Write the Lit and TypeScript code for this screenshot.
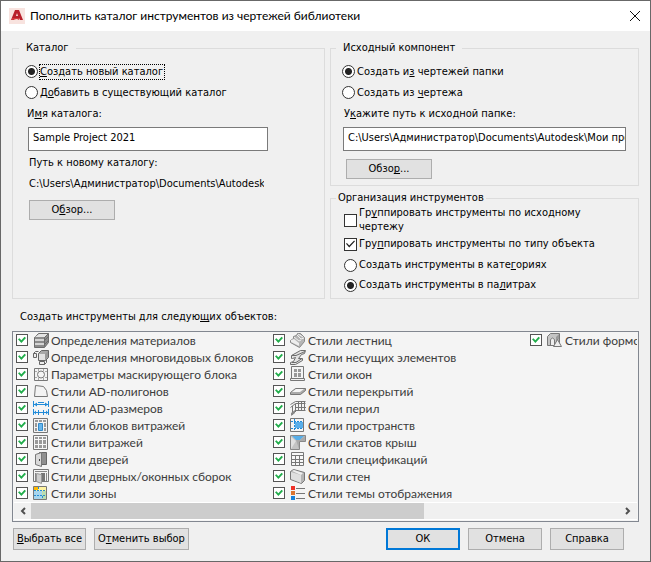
import { LitElement, html, svg, css, TemplateResult } from 'lit';
import { customElement } from 'lit/decorators.js';

type Item = { label: string; icon: TemplateResult };

const items: Item[] = [
  {
    label: 'Определения материалов',
    icon: svg`<path d="M1.500 5.500l4-4h10v9l-4 5h-10z" fill="#8c8c8c" stroke="#6c6c6c"/><path d="M2 5l4-3h9l-3 3z" fill="#e4e4e4"/><path d="M2 7h9v2H2zM2 11h9v2H2z" fill="#d4d4d4"/><path d="M11.500 5.500v9M11.500 8.500l4-4M11.500 12.500l4-4M11.500 5.500l4-4" stroke="#6c6c6c" fill="none"/>`,
  },
  {
    label: 'Определения многовидовых блоков',
    icon: svg`<path d="M5.500 4.500l3-3h7v7l-3 3h-7z" fill="#a8a8a8" stroke="#666"/><path d="M6 5h6v6H6z" fill="#e2e2e2"/><path d="M12 5l3-3v6l-3 3z" fill="#999"/><path d="M.5 4.500h3v4h-3zM.5 4.500l2-2h3M6.500 12.500h5v3h-5zM11.500 15.500l2-2v-3" fill="#eee" stroke="#666"/>`,
  },
  {
    label: 'Параметры маскирующего блока',
    icon: svg`<path d="M1.500 2.500h13v12h-13z" fill="#f4f4f4" stroke="#777"/><path d="M5.500 3v2m0 7v2M10.500 3v2m0 7v2M2 5.500h2m8 0h2M2 11.500h2m8 0h2" stroke="#aaa"/><circle cx="8" cy="8.500" r="3.500" fill="#f4f4f4" stroke="#777"/>`,
  },
  {
    label: 'Стили AD-полигонов',
    icon: svg`<path d="M2.500 2.500l8 1 3 4 1 6H1.500z" fill="#f3f3f3" stroke="#777"/>`,
  },
  {
    label: 'Стили AD-размеров',
    icon: svg`<path d="M.5 1v6M15.500 1v6M1 4.500h3M12 4.500h3M5 2.500h6M4 4.500h8M.5 9v6M15.500 9v6M5.500 10v5M10.500 10v5M1 12.500h14" stroke="#218bd8" fill="none"/><path d="M1 4.500l3-2v4zM15 4.500l-3-2v4zM1 12.500l2-2v4zM15 12.500l-2-2v4z" fill="#218bd8"/>`,
  },
  {
    label: 'Стили блоков витражей',
    icon: svg`<path d="M.5 1.500h14v14H.5z" fill="#f3f3f3" stroke="#777"/><path d="M2 3h3v2H2zM6 3h3v2H6zM10 3h3v2h-3zM2 6h2v4H2zM11 6h2v4h-2zM2 11h2v3H2zM11 11h2v3h-2z" fill="#999"/><path d="M5.500 6.500h4v7h-4z" fill="#65b5ec" stroke="#3289c8"/>`,
  },
  {
    label: 'Стили витражей',
    icon: svg`<path d="M.5 1.500h14v14H.5z" fill="#f7f7f7" stroke="#777"/><path d="M2 3h3v2H2zM6 3h3v2H6zM10 3h3v2h-3zM2 6h3v4H2zM6 6h3v4H6zM10 6h3v4h-3zM2 11h3v3H2zM6 11h3v3H6zM10 11h3v3h-3z" fill="#999"/>`,
  },
  {
    label: 'Стили дверей',
    icon: svg`<path d="M6.500 1.500h7v12h-7z" fill="#8f8f8f" stroke="#666"/><path d="M2.500 3.500l6-2v14l-6-2z" fill="#d9d9d9" stroke="#777"/><path d="M6.500 8v2" stroke="#444"/>`,
  },
  {
    label: 'Стили дверных/оконных сборок',
    icon: svg`<path d="M.5 1.500h15v12H.5z" fill="#f5f5f5" stroke="#777"/><path d="M2 3.500h12M2.500 5v8M13.500 5v8" stroke="#888"/><path d="M8 5h4v8H8z" fill="#777"/><path d="M3.500 5.500l5 1v9l-5-2z" fill="#cfcfcf" stroke="#999"/>`,
  },
  {
    label: 'Стили зоны',
    icon: svg`<path d="M.5 1.500h13v13H.5z" fill="#fff3a0" stroke="#777"/><path d="M1 6h8v8H1z" fill="#a6d5ee"/><path d="M9 6h4v8H9z" fill="#b9ddb0"/><path d="M1 2h4v3H1z" fill="#ffb900"/><path d="M1 5.500h12M1 10.500h12M5.500 2v4M9.500 11v3" stroke="#258cd0" stroke-dasharray="2 1"/>`,
  },
  {
    label: 'Стили лестниц',
    icon: svg`<path d="M.5 8.500l3-2v-2l3-1 1-2 3 0 4 4v4l-5 6-9-5z" fill="#b5b5b5" stroke="#888"/><path d="M1 8l3-1 5 4v3l-8-4z" fill="#eee"/><path d="M4 5l5 4 2-1M7 3l4 4 3-1M8 2l5 3" stroke="#f0f0f0" fill="none"/>`,
  },
  {
    label: 'Стили несущих элементов',
    icon: svg`<path d="M1.500 6.500l9-5h5l-1 3-3 1-3 4h4v2l-7 4h-5v-2l3-1 2-4-3 1h-1z" fill="#e2e2e2" stroke="#6c6c6c"/><path d="M2 6.500h4l9-4M2 13.500h4l6-4" stroke="#6c6c6c" fill="none"/>`,
  },
  {
    label: 'Стили окон',
    icon: svg`<path d="M1.500.500h12v12h-12z" fill="#f4f4f4" stroke="#777"/><path d="M4 3h3v3H4zM8 3h3v3H8zM4 7h3v4H4zM8 7h3v4H8z" fill="#999"/><path d="M.5 12.500h14v2H.5z" fill="#f2f2f2" stroke="#777"/>`,
  },
  {
    label: 'Стили перекрытий',
    icon: svg`<path d="M.5 9.500l5-4h10v2l-5 4H.5z" fill="#aaa" stroke="#777"/><path d="M2 9l4-3h8l-4 3z" fill="#f5f5f5"/>`,
  },
  {
    label: 'Стили перил',
    icon: svg`<path d="M.5 4.500l5-3h10M.5 7.500l5-4h10M1.500 14.500l4-4h10M2.500 6v9M5.500 4v8M8.500 2v9M11.500 2v9M14.500 2v9M6 7.500h10" stroke="#777" fill="none"/><path d="M1 13l4-3v3l-4 3z" fill="#888"/>`,
  },
  {
    label: 'Стили пространств',
    icon: svg`<path d="M.5 1.500h13v13H.5z" fill="#f4f4f4" stroke="#777"/><path d="M5 5h8v6H5z" fill="#59aee9"/><path d="M1 4.500h12M1 11.500h12M4.500 2v12" stroke="#218bd8" stroke-dasharray="2 1"/>`,
  },
  {
    label: 'Стили скатов крыш',
    icon: svg`<path d="M.5 1.500h15v6h-6v8h-9z" fill="#c3c3c3" stroke="#888"/><path d="M2 2h12l-4 4H6z" fill="#58aee8"/><path d="M1 3l5 4-5 8z" fill="#e0e0e0"/><path d="M6 6h4l5-4v5H9v8z" fill="#aaa"/>`,
  },
  {
    label: 'Стили спецификаций',
    icon: svg`<path d="M1.500 1.500h12v13h-12z" fill="#f7f7f7" stroke="#777"/><path d="M2 4.500h12M2 8.500h12M2 11.500h12M5.500 5v10M9.500 5v10" stroke="#777"/>`,
  },
  {
    label: 'Стили стен',
    icon: svg`<path d="M.5 3.500l3-2 11 3v8l-3 3-11-4z" fill="#b4b4b4" stroke="#777"/><path d="M1 4l10 3v8L1 11z" fill="#dfdfdf"/><path d="M2 3l2-1 9 3-2 2z" fill="#eee"/>`,
  },
  {
    label: 'Стили темы отображения',
    icon: svg`<path d="M1 1h4v4H1z" fill="#ef3128"/><path d="M1 6h4v4H1z" fill="#dd7530"/><path d="M1 11h4v4H1z" fill="#1782dc"/><path d="M6 3.500h9M6 8.500h9M6 13.500h9" stroke="#777"/>`,
  },
  {
    label: 'Стили формообразующих элементов',
    icon: svg`<path d="M.5 4.500l3-3h9v12h-12z" fill="#c4c4c4" stroke="#777"/><path d="M3.500 13V7.500q2-3 4 0V13" fill="#eee" stroke="#777"/><path d="M12 2v5l-3 3V5z" fill="#999"/><path d="M6.500 14.500l4-7 4 7z" fill="#eee" stroke="#777"/>`,
  },
];

@customElement('app-root')
export class AppRoot extends LitElement {
  static styles = css`
    :host {
      display: block;
      font: 11px/16px 'DejaVu Sans Condensed', 'DejaVu Sans', sans-serif;
      color: #000;
    }
    * { box-sizing: border-box; }
    .dialog {
      display: flex;
      flex-direction: column;
      min-height: 100vh;
      border: 1px solid #686868;
      background: #f0f0f0;
    }
    .title {
      display: flex;
      align-items: center;
      gap: 5px;
      height: 30px;
      padding: 0 10px 0 8px;
      background: #fff;
      font: 12px/16px Lato, 'Liberation Sans', sans-serif;
    }
    .title h1 { flex: 1; margin: 0; font: inherit; }
    .logo { width: 16px; height: 16px; }
    .close { display: flex; padding: 0; border: 0; background: none; }
    .body {
      flex: 1;
      display: flex;
      flex-direction: column;
      padding: 9px 11px 0;
    }
    .groups {
      display: grid;
      grid-template-columns: 313fr 309fr;
      gap: 5px;
    }
    .side { display: flex; flex-direction: column; gap: 4px; }
    fieldset {
      display: block;
      min-width: 0;
      margin: 0;
      padding: 5px 12px 8px;
      border: 1px solid #dcdcdc;
    }
    .side fieldset { padding: 5px 11px 6px; }
    .side .tools { padding: 0 13px 3px; }
    legend { margin-inline-start: -6px; padding: 0 7px; }
    .tools legend { padding: 0 2px; margin-inline-start: -8px; }
    .option {
      display: flex;
      align-items: center;
      gap: 2px;
      min-height: 21px;
    }
    .wrap { line-height: 14px; height: 28px; }
    .tools .option { min-height: 20px; }
    .type { margin-bottom: 1px; }
    .focus { padding: 0 1px 0 0; outline: 1px dotted #000; line-height: 14px; }
    .field { display: block; line-height: 21px; padding: 0 2px; }
    input { flex: none; margin: 0; }
    input[type='radio'] {
      appearance: none;
      width: 13px;
      height: 13px;
      border: 1px solid #333;
      border-radius: 50%;
      background: #fff;
    }
    input[type='radio']:checked {
      background: radial-gradient(circle, #222 3px, #fff 4px);
    }
    input[type='checkbox'] {
      appearance: none;
      display: grid;
      width: 13px;
      height: 13px;
      border: 1px solid #333;
      background: #fff;
    }
    input[type='checkbox']:checked::before {
      content: '';
      margin: 1px;
      background: #222;
      clip-path: polygon(0 48%, 10% 40%, 36% 68%, 90% 10%, 100% 20%, 36% 88%);
    }
    input[type='text'] {
      display: block;
      height: 24px;
      margin: 3px 0 0 3px;
      padding: 0 0 3px 4px;
      border: 1px solid #7a7a7a;
      border-radius: 0;
      background: #fff;
      font: inherit;
      color: inherit;
    }
    input.name { width: 84%; max-width: 240px; }
    input.source { width: calc(100% - 2px); margin-left: 1px; }
    .path {
      width: 84%;
      max-width: 235px;
      margin: 5px 0 8px 4px;
      overflow: hidden;
      white-space: nowrap;
    }
    .caption { margin: 4px 0 0 4px; }
    button {
      font: inherit;
      color: inherit;
      white-space: nowrap;
    }
    .button {
      height: 22px;
      padding: 0 2px;
      border: 1px solid #adadad;
      background: #e1e1e1;
    }
    .browse { display: block; width: 86px; height: 20px; margin: 0 4px; line-height: 14px; }
    .side .browse { margin-top: 8px; }
    .heading { margin: 10px 8px 6px; }
    .list {
      border: 1px solid #828790;
      background: #f4f4f4;
      padding: 0 1px 1px;
    }
    .items {
      display: grid;
      grid-auto-flow: column;
      grid-template-rows: repeat(10, 17px);
      grid-auto-columns: 257px;
      overflow: hidden;
      margin: 0;
      padding: 0;
      list-style: none;
      font: 12px/17px Lato, 'Liberation Sans', sans-serif;
      color: #3c3c3c;
    }
    .item {
      display: flex;
      align-items: center;
      gap: 2px;
      padding-left: 2px;
      white-space: nowrap;
    }
    .items input[type='checkbox'] {
      width: 12px;
      height: 12px;
      margin: 0 3px 1px 0;
      border-color: #555;
    }
    .items input[type='checkbox']:checked::before {
      background: #21ad4b;
      clip-path: polygon(0 40%, 18% 28%, 42% 52%, 82% 8%, 100% 24%, 42% 88%);
    }
    .icon { flex: none; width: 16px; height: 17px; }
    .scroll {
      display: grid;
      grid-template-columns: 17px 2fr 1fr 17px;
      height: 18px;
      border-top: 1px solid #fff;
      border-bottom: 1px solid #fff;
      background: #f0f0f0;
    }
    .arrow { display: grid; place-items: center; padding: 0; border: 0; background: none; }
    .thumb { background: #cdcdcd; }
    .arrow:last-child { grid-column: 4; }
    .footer { display: flex; gap: 8px; padding: 6px 15px 10px 1px; }
    .all { width: 73px; }
    .none { width: 95px; }
    .end { display: flex; gap: 8px; margin-left: auto; }
    .end .button { width: 74px; }
    .end .ok { border: 2px solid #0078d7; }
    u { text-underline-offset: 1px; text-decoration-thickness: 1px; text-decoration-skip-ink: none; }
  `;

  render() {
    return html`
      <main class="dialog">
        <header class="title">
          <svg class="logo" viewBox="0 0 16 16" aria-hidden="true">
            <path d="M0 0h16v16H0z" fill="#f8e3df" />
            <path d="M6 2h4l4 10h-3l-1-2H6l-1 2H2z" fill="#b8202b" />
            <path d="M8 5l1 3H7z" fill="#f8e3df" />
            <path d="M3 10h7v2l-2-1-5 1z" fill="#d23a3d" />
          </svg>
          <h1>Пополнить каталог инструментов из чертежей библиотеки</h1>
          <button class="close" aria-label="Закрыть">
            <svg width="10" height="10" viewBox="0 0 10 10"><path d="M0 0l10 10M10 0L0 10" stroke="#111" /></svg>
          </button>
        </header>
        <div class="body">
          <div class="groups">
            <fieldset>
              <legend>Каталог</legend>
              <label class="option"><input type="radio" name="catalog" checked /><span class="focus"><u>С</u>оздать новый каталог</span></label>
              <label class="option"><input type="radio" name="catalog" /><span>Д<u>о</u>бавить в существующий каталог</span></label>
              <label class="field" for="name">И<u>м</u>я каталога:</label>
              <input class="name" id="name" type="text" value="Sample Project 2021" />
              <div class="caption">Путь к новому каталогу:</div>
              <div class="path">C:\\Users\\Администратор\\Documents\\Autodesk</div>
              <button class="button browse">О<u>б</u>зор...</button>
            </fieldset>
            <div class="side">
              <fieldset>
                <legend>Исходный компонент</legend>
                <label class="option"><input type="radio" name="source" checked /><span>Создать и<u>з</u> чертежей папки</span></label>
                <label class="option"><input type="radio" name="source" /><span>Создать из <u>ч</u>ертежа</span></label>
                <label class="field" for="source">У<u>к</u>ажите путь к исходной папке:</label>
                <input class="source" id="source" type="text" value="C:\\Users\\Администратор\\Documents\\Autodesk\\Мои проекты" />
                <button class="button browse">Обзо<u>р</u>...</button>
              </fieldset>
              <fieldset class="tools">
                <legend>Организация инструментов</legend>
                <label class="option wrap"><input type="checkbox" /><span>Гр<u>у</u>ппировать инструменты по исходному чертежу</span></label>
                <label class="option type"><input type="checkbox" checked /><span>Гру<u>п</u>пировать инструменты по типу объекта</span></label>
                <label class="option"><input type="radio" name="output" /><span>Создать инструменты в кате<u>г</u>ориях</span></label>
                <label class="option"><input type="radio" name="output" checked /><span>Создать инструменты в па<u>л</u>итрах</span></label>
              </fieldset>
            </div>
          </div>
          <div class="heading">Создать инструменты для следую<u>щ</u>их объектов:</div>
          <div class="list">
            <ul class="items">
              ${items.map(
                (item) => html`<li><label class="item">
                  <input type="checkbox" checked />
                  <svg class="icon" viewBox="0 0 16 17" aria-hidden="true">${item.icon}</svg>
                  <span>${item.label}</span>
                </label></li>`,
              )}
            </ul>
            <div class="scroll">
              <button class="arrow" aria-label="Влево">
                <svg width="6" height="8" viewBox="0 0 6 8"><path d="M5 1L2 4l3 3" fill="none" stroke="#505050" stroke-width="2" /></svg>
              </button>
              <div class="thumb"></div>
              <button class="arrow" aria-label="Вправо">
                <svg width="6" height="8" viewBox="0 0 6 8"><path d="M1 1l3 3-3 3" fill="none" stroke="#505050" stroke-width="2" /></svg>
              </button>
            </div>
          </div>
          <footer class="footer">
            <button class="button all"><u>В</u>ыбрать все</button>
            <button class="button none">О<u>т</u>менить выбор</button>
            <div class="end">
              <button class="button ok">ОК</button>
              <button class="button">Отмена</button>
              <button class="button">Справка</button>
            </div>
          </footer>
        </div>
      </main>
    `;
  }
}
